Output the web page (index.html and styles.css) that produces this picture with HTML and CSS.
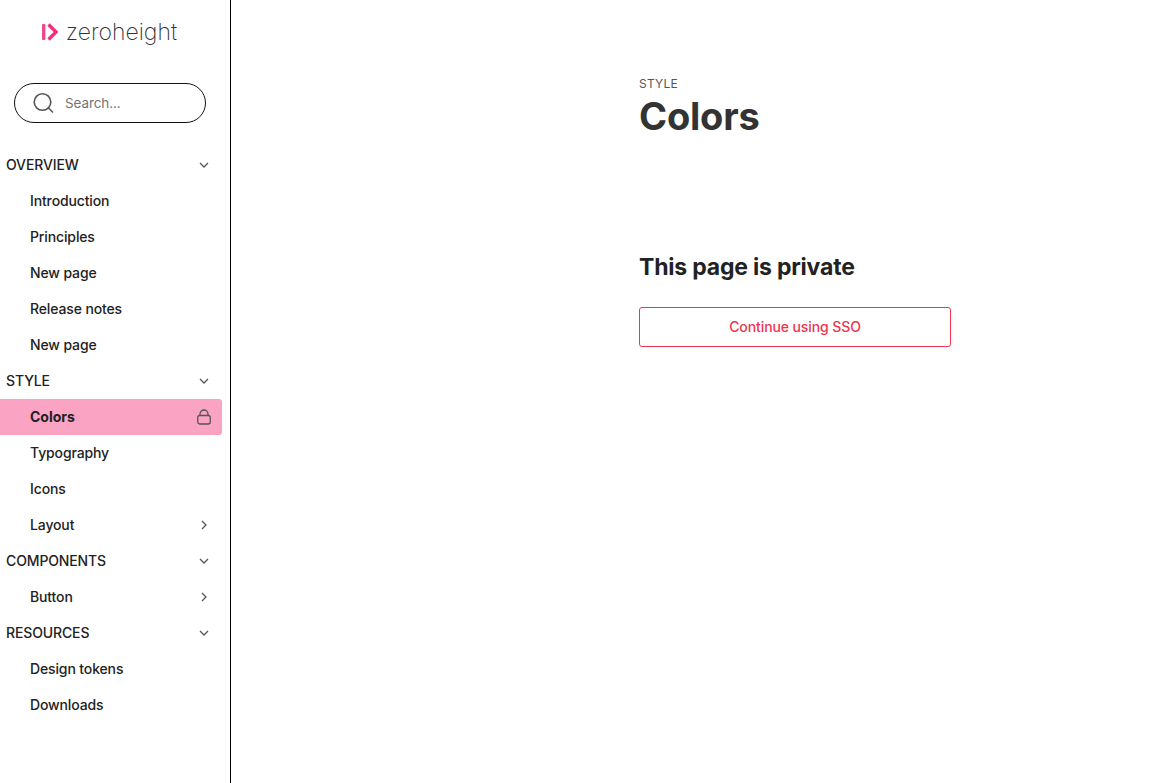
FILE: index.html
```html
<!DOCTYPE html>
<html lang="en">
<head>
<meta charset="utf-8">
<title>Colors</title>
<link rel="stylesheet" href="styles.css">
</head>
<body>
<div class="app">
  <aside class="sidebar">
    <div class="logo">
      <svg class="logo-mark" width="16" height="18" viewBox="0 0 16 18"><rect x="0" y="1" width="3.4" height="16" rx="1" fill="#f0468e"/><path d="M6.500 1.500 14 9l-7.500 7.500" fill="none" stroke="#f52f7f" stroke-width="3.400"/></svg>
      <span class="logo-text">zeroheight</span>
    </div>
    <div class="search">
      <svg width="24" height="24" viewBox="0 0 24 24" fill="none" stroke="#555" stroke-width="1.600"><circle cx="11.500" cy="11" r="8.300"/><path d="M17.500 17l4 4" stroke-linecap="round"/></svg>
      <span class="search-text">Search...</span>
    </div>
    <nav class="nav">
      <div class="row section"><span>OVERVIEW</span><svg class="chev" width="12" height="12" viewBox="0 0 12 12"><path d="M2 4l4 4 4-4"/></svg></div>
      <div class="row item"><span>Introduction</span></div>
      <div class="row item"><span>Principles</span></div>
      <div class="row item"><span>New page</span></div>
      <div class="row item"><span>Release notes</span></div>
      <div class="row item"><span>New page</span></div>
      <div class="row section"><span>STYLE</span><svg class="chev" width="12" height="12" viewBox="0 0 12 12"><path d="M2 4l4 4 4-4"/></svg></div>
      <div class="row item active"><span>Colors</span><svg class="lock" width="14" height="16" viewBox="0 0 14 16"><rect x="0.750" y="6.500" width="12.500" height="8.500" rx="2"/><path d="M3 6.500V5a4 4 0 0 1 8 0v1.500"/></svg></div>
      <div class="row item"><span>Typography</span></div>
      <div class="row item"><span>Icons</span></div>
      <div class="row item"><span>Layout</span><svg class="chev" width="12" height="12" viewBox="0 0 12 12"><path d="M4 2l4 4-4 4"/></svg></div>
      <div class="row section"><span>COMPONENTS</span><svg class="chev" width="12" height="12" viewBox="0 0 12 12"><path d="M2 4l4 4 4-4"/></svg></div>
      <div class="row item"><span>Button</span><svg class="chev" width="12" height="12" viewBox="0 0 12 12"><path d="M4 2l4 4-4 4"/></svg></div>
      <div class="row section"><span>RESOURCES</span><svg class="chev" width="12" height="12" viewBox="0 0 12 12"><path d="M2 4l4 4 4-4"/></svg></div>
      <div class="row item"><span>Design tokens</span></div>
      <div class="row item"><span>Downloads</span></div>
    </nav>
  </aside>
  <main class="main">
    <div class="column">
      <div class="eyebrow">STYLE</div>
      <h1 class="title">Colors</h1>
      <h2 class="private">This page is private</h2>
      <button class="sso">Continue using SSO</button>
    </div>
  </main>
</div>
</body>
</html>
```
FILE: styles.css
```css
* { box-sizing: border-box; }
html, body { margin: 0; height: 100%; }
body { font-family: Inter, "Liberation Sans", sans-serif; background: #fff; color: #222; }
.app { display: flex; height: 783px; overflow: hidden; }
.sidebar { width: 231px; flex: none; border-right: 1px solid #000; padding-top: 15px; }
.logo { display: flex; align-items: center; justify-content: center; gap: 8px; height: 34px; padding-right: 11px; }
.logo-mark { flex: none; }
.logo-text { font-family: Inter, sans-serif; font-weight: 200; font-size: 23px; letter-spacing: 0; color: #333; }
.search { display: flex; align-items: center; gap: 10px; height: 40px; width: 192px; margin: 34px 0 0 14px; padding-left: 16px; border: 1px solid #111; border-radius: 20px; }
.search-text { font-size: 13.500px; color: #757575; letter-spacing: -0.100px; }
.nav { margin-top: 24px; width: 222px; }
.row { display: flex; align-items: center; justify-content: space-between; height: 36px; font-size: 14px; font-weight: 500; color: #222; padding-right: 12px; letter-spacing: -0.130px; }
.row span { margin-bottom: 2px; }
.section { padding-left: 6px; }
.item { padding-left: 30px; }
.active { background: #fba3c3; border-radius: 0 3px 3px 0; font-weight: 700; padding-right: 11px; letter-spacing: 0; }
.chev { fill: none; stroke: #555; stroke-width: 1.300; flex: none; }
.lock { fill: none; stroke: #555; stroke-width: 1.300; flex: none; }
.main { flex: 1; }
.column { width: 312px; margin-left: 408px; padding-top: 76px; }
.eyebrow { font-size: 12px; line-height: 15px; color: #555; letter-spacing: 0.200px; }
.title { margin: 2px 0 0; font-size: 38px; line-height: 46px; font-weight: 700; color: #333; letter-spacing: -0.200px; }
.private { margin: 113px 0 0; font-size: 23px; line-height: 30px; font-weight: 700; color: #222; letter-spacing: -0.200px; }
.sso { display: block; width: 312px; height: 40px; margin-top: 25px; padding: 0 0 2px; background: #fff; border: 1px solid #f0344e; border-radius: 3px; color: #f0344e; font-family: inherit; font-size: 14px; font-weight: 500; letter-spacing: -0.100px; }
```
